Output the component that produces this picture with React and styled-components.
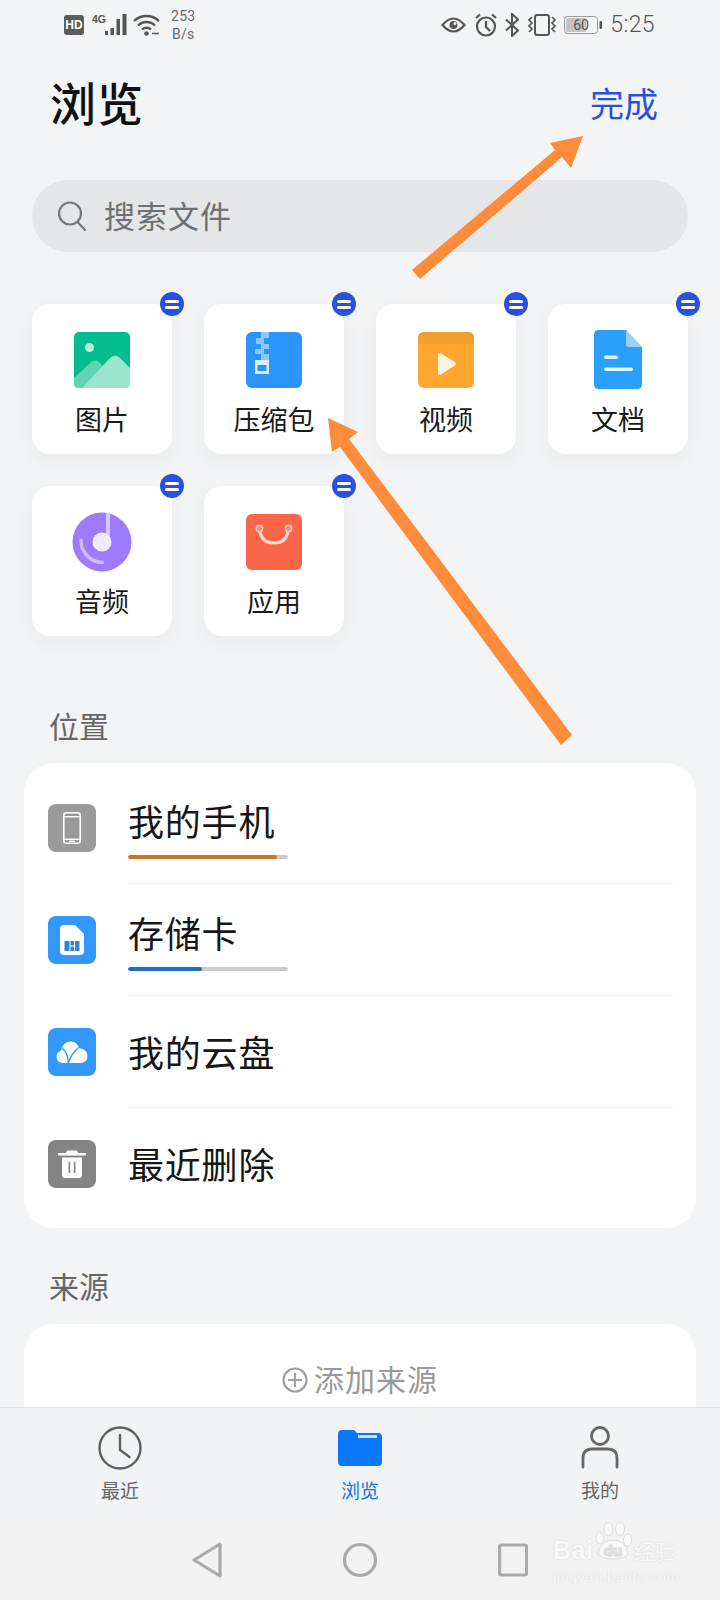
import React from "react";
import styled, { createGlobalStyle } from "styled-components";

const Global = createGlobalStyle`
  html, body { margin: 0; padding: 0; background: #f3f4f6; }
  * { box-sizing: border-box; }
  body { font-family: "Noto Sans CJK SC", "Noto Sans", sans-serif; }
`;

const Page = styled.div`
  position: relative;
  width: 720px;
  height: 1600px;
  overflow: hidden;
  display: flex;
  flex-direction: column;
  background: #f3f4f6;
`;
const Content = styled.main`
  flex: 1;
  min-height: 0;
  overflow: hidden;
`;
const StatusBar = styled.div`
  height: 50px;
  padding: 0 65px 0 64px;
  display: flex;
  align-items: center;
  justify-content: space-between;
  color: #555;
`;
const StatusGroup = styled.div`
  display: flex;
  align-items: center;
  gap: ${(p) => p.$gap}px;
`;
const HdBadge = styled.span`
  width: 20px;
  height: 20px;
  margin-right: 2px;
  border-radius: 3px;
  background: #5c5c5c;
  color: #fff;
  font: 700 12px/20px "Liberation Sans", sans-serif;
  text-align: center;
`;
const Speed = styled.div`
  font: 400 14px/18px Roboto, sans-serif;
  letter-spacing: 0.3px;
  color: #6a6a6a;
  text-align: center;
  margin-left: 5px;
`;
const Clock = styled.span`
  font: 300 23px/28px Roboto, sans-serif;
  color: #555;
  letter-spacing: 0.4px;
`;
const Header = styled.header`
  height: 110px;
  padding: 0 62px 0 50px;
  display: flex;
  align-items: center;
  justify-content: space-between;
`;
const Title = styled.h1`
  margin: 0 0 8px;
  font-size: 46px;
  line-height: 56px;
  font-weight: 500;
  letter-spacing: 1px;
  color: #111;
`;
const Done = styled.span`
  margin-bottom: 4px;
  font-size: 34px;
  line-height: 44px;
  color: #2a50d8;
`;
const Search = styled.div`
  margin: 20px 32px 0;
  height: 72px;
  border-radius: 36px;
  background: #e5e6e8;
  display: flex;
  align-items: center;
  padding-left: 26px;
  gap: 18px;
  color: #6f7072;
  font-size: 31px;
  letter-spacing: 1px;
`;
const SearchText = styled.span`
  margin-bottom: 4px;
`;
const TileGrid = styled.div`
  margin: 52px 32px 0;
  display: grid;
  grid-template-columns: repeat(4, 140px);
  gap: 32px;
`;
const Tile = styled.div`
  position: relative;
  height: 150px;
  border-radius: 18px;
  background: #fff;
  box-shadow: 0 6px 18px rgba(40, 50, 70, 0.05);
  display: flex;
  flex-direction: column;
  align-items: center;
  padding-top: 26px;
`;
const TileIcon = styled.div`
  width: 60px;
  height: 60px;
  display: flex;
  align-items: center;
  justify-content: center;
`;
const TileLabel = styled.span`
  margin-top: 11px;
  font-size: 27px;
  line-height: 36px;
  color: #1a1a1a;
`;
const RemoveBadge = styled.span`
  position: absolute;
  top: -12px;
  right: -12px;
  width: 24px;
  height: 24px;
  border-radius: 50%;
  background: #2a50e0;
  display: flex;
  flex-direction: column;
  align-items: center;
  justify-content: center;
  gap: 3px;
  &::before, &::after {
    content: "";
    width: 14px;
    height: 3px;
    border-radius: 2px;
    background: #fff;
  }
`;
const SectionLabel = styled.div`
  margin: ${(p) => p.$top}px 0 0 49px;
  font-size: 30px;
  line-height: 40px;
  color: #666;
`;
const Card = styled.section`
  margin: ${(p) => p.$top}px 24px 0;
  border-radius: 30px;
  background: #fff;
  padding: ${(p) => p.$pad};
`;
const Row = styled.div`
  height: 112px;
  padding-left: 24px;
  display: flex;
  align-items: center;
  gap: 32px;
`;
const RowIcon = styled.div`
  width: 48px;
  height: 48px;
  flex: none;
  border-radius: 8px;
  background: ${(p) => p.$bg};
  display: flex;
  align-items: center;
  justify-content: center;
`;
const RowBody = styled.div`
  flex: 1;
  height: 100%;
  margin-right: 23px;
  display: flex;
  flex-direction: column;
  justify-content: center;
  border-bottom: ${(p) => (p.$last ? "none" : "1px solid #eeeff0")};
`;
const RowText = styled.div`
  font-size: 36px;
  line-height: 46px;
  color: #161616;
  letter-spacing: 0.8px;
  margin-bottom: ${(p) => (p.$bar ? "0" : "2px")};
`;
const Track = styled.div`
  width: 160px;
  height: 4px;
  border-radius: 2px;
  background: #cccccc;
  overflow: hidden;
  margin-top: 12px;
`;
const Fill = styled.div`
  height: 100%;
  border-radius: 2px;
  background: ${(p) => p.$color};
`;
const AddRow = styled.div`
  height: 112px;
  display: flex;
  align-items: center;
  justify-content: center;
  gap: 6px;
  color: #999;
  font-size: 30px;
  letter-spacing: 1px;
`;
const AddText = styled.span`
  margin-bottom: 4px;
`;
const TabBar = styled.nav`
  height: 113px;
  flex: none;
  background: #f2f3f4;
  border-top: 1px solid #e4e5e7;
  padding-top: 18px;
  display: grid;
  grid-template-columns: repeat(3, 240px);
`;
const Tab = styled.div`
  display: flex;
  flex-direction: column;
  align-items: center;
  color: ${(p) => (p.$active ? "#0a7ae0" : "#666")};
`;
const TabIcon = styled.div`
  height: 44px;
  display: flex;
  align-items: center;
  justify-content: center;
`;
const TabLabel = styled.span`
  margin-top: 7px;
  font-size: 19px;
  line-height: 26px;
`;
const SystemNav = styled.div`
  height: 80px;
  flex: none;
  background: #f2f2f3;
  display: flex;
  align-items: center;
  justify-content: center;
  gap: 121px;
`;
const Arrows = styled.svg`
  position: absolute;
  left: 0;
  top: 0;
  pointer-events: none;
`;
const Watermark = styled.div`
  position: absolute;
  left: 553px;
  top: 1522px;
  width: 128px;
  color: #f9f9f9;
  text-shadow: 0 0 1.5px #cfcfcf;
  font-family: "Liberation Sans", sans-serif;
`;
const WatermarkBrand = styled.div`
  display: flex;
  align-items: flex-end;
  height: 38px;
`;
const WatermarkBai = styled.span`
  font-size: 25px;
  line-height: 30px;
  font-weight: 700;
  letter-spacing: 0.5px;
  margin: 0 2px -5px 0;
`;
const WatermarkJy = styled.span`
  font-family: "Noto Sans CJK SC", sans-serif;
  font-size: 21px;
  line-height: 26px;
  margin: 0 0 -3px 1px;
`;
const WatermarkUrl = styled.div`
  margin-top: 9px;
  font-size: 15px;
  line-height: 16px;
  white-space: nowrap;
  letter-spacing: 0.3px;
`;

const ImageIcon = () => (
  <svg width="56" height="56" viewBox="0 0 56 56">
    <rect width="56" height="56" rx="5" fill="#04bd8e" />
    <circle cx="15.5" cy="15.5" r="4.5" fill="#b5f0dd" />
    <path d="M0 46 L17 30 Q21 27 25 30 L40 45 L28 56 H5 Q0 56 0 51Z" fill="#5fd3b2" />
    <path d="M8 56 L36 26 Q41 21 46 26 L56 36 V51 Q56 56 51 56Z" fill="#9be5cf" />
  </svg>
);
const ZipIcon = () => (
  <svg width="56" height="56" viewBox="0 0 56 56">
    <rect width="56" height="56" rx="6" fill="#2a96fb" />
    <g fill="#8cc6fb">
      <rect x="15" y="0" width="8" height="6" />
      <rect x="10" y="6" width="8" height="6" />
      <rect x="15" y="12" width="8" height="5" />
      <rect x="9" y="17" width="9" height="5" />
      <rect x="15" y="22" width="8" height="6" />
    </g>
    <rect x="9" y="28" width="14" height="14" fill="#dcedfe" />
    <rect x="11.5" y="33" width="9" height="6" fill="#2a96fb" />
  </svg>
);
const VideoIcon = () => (
  <svg width="56" height="56" viewBox="0 0 56 56">
    <rect width="56" height="56" rx="6" fill="#ffa631" />
    <path d="M0 12 V6 Q0 0 6 0 H50 Q56 0 56 6 V12Z" fill="#f29e2e" />
    <path d="M20 23 Q20 20 23 21.5 L37 30 Q39 32 37 33.500 L23 42.500 Q20 44 20 41Z" fill="#fff4e4" />
  </svg>
);
const DocIcon = () => (
  <svg width="48" height="60" viewBox="0 0 48 60">
    <path d="M5 0 H32 L48 17 V54 Q48 59 43 59 H5 Q0 59 0 54 V5 Q0 0 5 0Z" fill="#2aa0fd" />
    <path d="M32 0 L48 17 H35 Q32 17 32 14Z" fill="#9ad2fd" />
    <rect x="10" y="25.5" width="14" height="3.5" rx="1.7" fill="#e3f2ff" />
    <rect x="10" y="37.5" width="29" height="3.5" rx="1.7" fill="#e3f2ff" />
  </svg>
);
const AudioIcon = () => (
  <svg width="60" height="60" viewBox="0 0 60 60">
    <circle cx="30" cy="30" r="29.5" fill="#9d7bfa" />
    <path d="M36 0.6 V29" stroke="#d8c9fc" strokeWidth="4" />
    <circle cx="30" cy="30" r="9.5" fill="#f1ecfd" />
    <path d="M9 28 A22 22 0 0 0 30.5 50.5" fill="none" stroke="#cdbcfd" strokeWidth="3.5" strokeLinecap="round" />
  </svg>
);
const BagIcon = () => (
  <svg width="56" height="56" viewBox="0 0 56 56">
    <rect width="56" height="56" rx="6" fill="#fb6549" />
    <path d="M13.5 15 Q15 29 28 29 Q41 29 42.500 15" fill="none" stroke="#fdd8ce" strokeWidth="3" />
    <circle cx="13.5" cy="14.5" r="3.2" fill="#fb8a74" stroke="#fdc4b6" strokeWidth="1.500" />
    <circle cx="42.5" cy="14.5" r="3.2" fill="#fb8a74" stroke="#fdc4b6" strokeWidth="1.500" />
  </svg>
);
const PhoneGlyph = () => (
  <svg width="18" height="32" viewBox="0 0 18 32">
    <rect x="0.8" y="0.8" width="16.4" height="30.4" rx="2.5" fill="none" stroke="#fff" strokeWidth="1.6" />
    <rect x="1" y="4" width="16" height="1.4" fill="#fff" />
    <rect x="1" y="26.6" width="16" height="1.4" fill="#fff" />
    <rect x="6" y="28.6" width="6" height="1.6" fill="#fff" />
  </svg>
);
const SdGlyph = () => (
  <svg width="24" height="30" viewBox="0 0 24 30">
    <path d="M4 0 H15 L24 9 V26 Q24 30 20 30 H4 Q0 30 0 26 V4 Q0 0 4 0Z" fill="#fff" />
    <path d="M4.5 16 H9.5 V26 H4.5Z M10.5 16 H14 V20.500 H10.5Z M10.5 21.500 H14 V26 H10.5Z M15 16 H19.5 V26 H15Z" fill="#2d88d8" />
  </svg>
);
const CloudGlyph = () => (
  <svg width="32" height="23" viewBox="0 0 32 23">
    <path d="M8 22 Q1 22 0.500 16 Q0.500 11 5 9.500 Q7 0.500 15 0.500 Q21 0.500 23 7 Q31 8 31.500 15 Q31.500 22 24 22Z" fill="#fff" />
    <path d="M6 7 Q13 13 12 23 Q15 13 22.500 6.500" fill="none" stroke="#3398fb" strokeWidth="1.400" />
  </svg>
);
const TrashGlyph = () => (
  <svg width="28" height="28" viewBox="0 0 28 28">
    <path d="M8 3 L9 0.500 H19 L20 3Z" fill="#fff" />
    <rect x="0" y="3" width="28" height="2.500" rx="1" fill="#fff" />
    <path d="M4 7.500 H24 V25 Q24 28 21 28 H7 Q4 28 4 25Z" fill="#fff" />
    <rect x="10.500" y="12" width="1.700" height="11" fill="#848484" />
    <rect x="15.800" y="12" width="1.700" height="11" fill="#848484" />
  </svg>
);
const SearchGlyph = () => (
  <svg width="28" height="30" viewBox="0 0 28 30" fill="none" stroke="#757678" strokeWidth="2.200" strokeLinecap="round">
    <circle cx="12" cy="12.500" r="11" />
    <path d="M19.500 21 L27 29" />
  </svg>
);
const PlusCircle = () => (
  <svg width="26" height="26" viewBox="0 0 26 26" fill="none" stroke="#a0a0a0" strokeWidth="2.200">
    <circle cx="13" cy="13" r="11.500" />
    <path d="M6 13 H20 M13 6 V20" />
  </svg>
);
const ClockIcon = () => (
  <svg width="44" height="44" viewBox="0 0 44 44" fill="none" stroke="#5f5f5f" strokeWidth="2.400" strokeLinecap="round">
    <circle cx="22" cy="22" r="20.500" />
    <path d="M22 9 V24 L31.500 31" />
  </svg>
);
const FolderIcon = () => (
  <svg width="44" height="36" viewBox="0 0 44 36">
    <path d="M4 0 H15 Q17 0 18 2 L19 3 H40 Q44 3 44 7 V32 Q44 36 40 36 H4 Q0 36 0 32 V4 Q0 0 4 0Z" fill="#0a78fa" />
    <rect x="20" y="5" width="19" height="3" fill="#cfe3fd" />
  </svg>
);
const PersonIcon = () => (
  <svg width="38" height="44" viewBox="0 0 38 44" fill="none" stroke="#676767" strokeWidth="2.800" strokeLinecap="round">
    <circle cx="19" cy="10" r="8.500" />
    <path d="M2 41 V32 Q2 23 11 23 H27 Q36 23 36 32 V41" />
  </svg>
);
const BackIcon = () => (
  <svg width="30" height="36" viewBox="0 0 30 36" fill="none" stroke="#aaa" strokeWidth="3.200" strokeLinejoin="round">
    <path d="M28 2 L2 18 L28 34Z" />
  </svg>
);
const HomeIcon = () => (
  <svg width="34" height="36" viewBox="0 0 34 36" fill="none" stroke="#aaa" strokeWidth="3.200">
    <circle cx="17" cy="18" r="15.500" />
  </svg>
);
const RecentIcon = () => (
  <svg width="30" height="36" viewBox="0 0 30 36" fill="none" stroke="#aaa" strokeWidth="3.200" strokeLinejoin="round">
    <rect x="1.600" y="3" width="27" height="30" rx="2" />
  </svg>
);
const SignalGlyph = () => (
  <svg width="35" height="22" viewBox="0 0 35 22">
    <text x="0" y="9" fontFamily="Liberation Sans" fontWeight="700" fontSize="10.500" fill="#555">4G</text>
    <g fill="#555">
      <rect x="13" y="17" width="3" height="4" />
      <rect x="18.500" y="14" width="3.500" height="7" />
      <rect x="24.500" y="5" width="3.500" height="16" />
      <rect x="30.500" y="0" width="4" height="21" />
    </g>
  </svg>
);
const WifiGlyph = () => (
  <svg width="27" height="22" viewBox="0 0 27 22" fill="none" stroke="#555" strokeWidth="2.400">
    <path d="M1 7 A18 18 0 0 1 26 7" />
    <path d="M5 11.500 A12 12 0 0 1 22 11.500" />
    <path d="M9 15.500 A6.500 6.500 0 0 1 18 15.500" />
    <circle cx="13.500" cy="19.500" r="2.300" fill="#555" stroke="none" />
    <path d="M19 19.500 H26" strokeWidth="1.500" />
  </svg>
);
const EyeGlyph = () => (
  <svg width="25" height="20" viewBox="0 0 25 20" fill="none" stroke="#555">
    <path d="M1.500 10 Q12.500 -3 23.500 10 Q12.500 23 1.500 10Z" strokeWidth="2.200" />
    <circle cx="12.500" cy="10" r="4" fill="#555" stroke="none" />
    <circle cx="14" cy="8.500" r="1.500" fill="#f3f4f6" stroke="none" />
  </svg>
);
const AlarmGlyph = () => (
  <svg width="22" height="24" viewBox="0 0 22 24" fill="none" stroke="#555" strokeWidth="2.200">
    <circle cx="11" cy="13.500" r="9" />
    <path d="M11 8 V14 L15 18" />
    <path d="M1 5 L5 1.500 M17 1.500 L21 5" />
  </svg>
);
const BluetoothGlyph = () => (
  <svg width="14" height="24" viewBox="0 0 14 24" fill="none" stroke="#555" strokeWidth="2">
    <path d="M1 6.500 L13 17.500 L7 23 V1 L13 6.500 L1 17.500" />
  </svg>
);
const VibrateGlyph = () => (
  <svg width="28" height="22" viewBox="0 0 28 22" fill="none" stroke="#555" strokeWidth="2">
    <rect x="7" y="1" width="14" height="20" rx="2" />
    <path d="M4 3 L1 6 L4 9 L1 12 L4 15 L1 18 M24 3 L27 6 L24 9 L27 12 L24 15 L27 18" strokeWidth="1.700" />
  </svg>
);
const BatteryGlyph = () => (
  <svg width="38" height="18" viewBox="0 0 38 18">
    <rect x="0.500" y="0.500" width="33" height="17" rx="3" fill="#f3f4f6" stroke="#999" />
    <rect x="2" y="2" width="20" height="14" rx="1.500" fill="#c4c4c4" />
    <rect x="35.500" y="5" width="2.500" height="8" rx="1" fill="#555" />
    <text x="17" y="14" textAnchor="middle" fontFamily="Roboto" fontSize="14" fill="#555">60</text>
  </svg>
);
const PawGlyph = () => (
  <svg width="37" height="38" viewBox="0 0 37 38" fill="#f9f9f9" stroke="#dcdcdc" strokeWidth="1">
    <ellipse cx="5" cy="16" rx="4" ry="6" />
    <ellipse cx="13.500" cy="7" rx="4.500" ry="6.500" />
    <ellipse cx="25" cy="7" rx="4.500" ry="6.500" />
    <ellipse cx="32.500" cy="18" rx="4" ry="6" />
    <path d="M3 31 Q6 18 18 18 Q30 18 33 31 Q32 37 18 37 Q5 37 3 31Z" />
    <text x="18" y="34" textAnchor="middle" fontFamily="Liberation Sans" fontWeight="700" fontSize="15" fill="#ececec" stroke="#d8d8d8" strokeWidth="0.500">du</text>
  </svg>
);

const tiles = [
  ["图片", ImageIcon],
  ["压缩包", ZipIcon],
  ["视频", VideoIcon],
  ["文档", DocIcon],
  ["音频", AudioIcon],
  ["应用", BagIcon],
];
const rows = [
  { label: "我的手机", bg: "#9a9a9a", Glyph: PhoneGlyph, fill: 149, color: "#c8742a" },
  { label: "存储卡", bg: "#3398fb", Glyph: SdGlyph, fill: 74, color: "#1b6fc0" },
  { label: "我的云盘", bg: "#3398fb", Glyph: CloudGlyph },
  { label: "最近删除", bg: "#848484", Glyph: TrashGlyph },
];
const tabs = [
  ["最近", ClockIcon, false],
  ["浏览", FolderIcon, true],
  ["我的", PersonIcon, false],
];

export default function App() {
  return (
    <Page>
      <Global />
      <Content>
        <StatusBar>
          <StatusGroup $gap={6}>
            <HdBadge>HD</HdBadge>
            <SignalGlyph />
            <WifiGlyph />
            <Speed>253<br />B/s</Speed>
          </StatusGroup>
          <StatusGroup $gap={8.4}>
            <EyeGlyph />
            <AlarmGlyph />
            <BluetoothGlyph />
            <VibrateGlyph />
            <BatteryGlyph />
            <Clock>5:25</Clock>
          </StatusGroup>
        </StatusBar>
        <Header>
          <Title>浏览</Title>
          <Done>完成</Done>
        </Header>
        <Search>
          <SearchGlyph />
          <SearchText>搜索文件</SearchText>
        </Search>
        <TileGrid>
          {tiles.map(([label, Icon]) => (
            <Tile key={label}>
              <RemoveBadge />
              <TileIcon><Icon /></TileIcon>
              <TileLabel>{label}</TileLabel>
            </Tile>
          ))}
        </TileGrid>
        <SectionLabel $top={69}>位置</SectionLabel>
        <Card $top={18} $pad="9px 0 8px">
          {rows.map(({ label, bg, Glyph, fill, color }, i) => (
            <Row key={label}>
              <RowIcon $bg={bg}><Glyph /></RowIcon>
              <RowBody $last={i === rows.length - 1}>
                <RowText $bar={!!fill}>{label}</RowText>
                {fill && (
                  <Track>
                    <Fill $color={color} style={{ width: fill }} />
                  </Track>
                )}
              </RowBody>
            </Row>
          ))}
        </Card>
        <SectionLabel $top={37}>来源</SectionLabel>
        <Card $top={19} $pad="0">
          <AddRow>
            <PlusCircle />
            <AddText>添加来源</AddText>
          </AddRow>
        </Card>
      </Content>
      <TabBar>
        {tabs.map(([label, Icon, active]) => (
          <Tab key={label} $active={active}>
            <TabIcon><Icon /></TabIcon>
            <TabLabel>{label}</TabLabel>
          </Tab>
        ))}
      </TabBar>
      <SystemNav>
        <BackIcon />
        <HomeIcon />
        <RecentIcon />
      </SystemNav>
      <Arrows width="720" height="1600" viewBox="0 0 720 1600">
        <path d="M583 136 L571 168 L562 157 L420 279 L412 270 L555 150 L550 143Z" fill="#ff8c3a" />
        <path d="M328 418 L358 432 L349 439 L572 735 L561 745 L340 447 L332 452Z" fill="#ff8c3a" />
      </Arrows>
      <Watermark>
        <WatermarkBrand>
          <WatermarkBai>Bai</WatermarkBai>
          <PawGlyph />
          <WatermarkJy>经验</WatermarkJy>
        </WatermarkBrand>
        <WatermarkUrl>jingyan.baidu.com</WatermarkUrl>
      </Watermark>
    </Page>
  );
}
